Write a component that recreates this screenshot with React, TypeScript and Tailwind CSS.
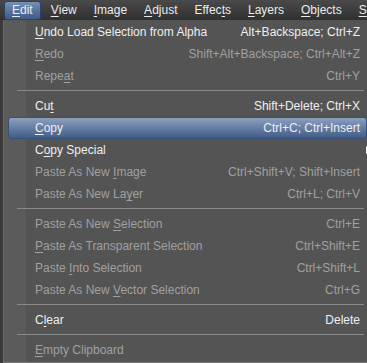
import React from 'react';

type Item =
  | { sep: true }
  | { sep?: false; label: string; u: number; key?: string; on?: boolean; hot?: boolean; sub?: boolean };

const items: Item[] = [
  { label: 'Undo Load Selection from Alpha', u: 0, key: 'Alt+Backspace; Ctrl+Z', on: true },
  { label: 'Redo', u: 0, key: 'Shift+Alt+Backspace; Ctrl+Alt+Z' },
  { label: 'Repeat', u: 4, key: 'Ctrl+Y' },
  { sep: true },
  { label: 'Cut', u: 2, key: 'Shift+Delete; Ctrl+X', on: true },
  { label: 'Copy', u: 0, key: 'Ctrl+C; Ctrl+Insert', on: true, hot: true },
  { label: 'Copy Special', u: 1, on: true, sub: true },
  { label: 'Paste As New Image', u: 13, key: 'Ctrl+Shift+V; Shift+Insert' },
  { label: 'Paste As New Layer', u: 15, key: 'Ctrl+L; Ctrl+V' },
  { sep: true },
  { label: 'Paste As New Selection', u: 13, key: 'Ctrl+E' },
  { label: 'Paste As Transparent Selection', u: 0, key: 'Ctrl+Shift+E' },
  { label: 'Paste Into Selection', u: 6, key: 'Ctrl+Shift+L' },
  { label: 'Paste As New Vector Selection', u: 13, key: 'Ctrl+G' },
  { sep: true },
  { label: 'Clear', u: 1, key: 'Delete', on: true },
  { sep: true },
  { label: 'Empty Clipboard', u: 0 },
];

const bar = [
  { label: 'Edit', u: 0 },
  { label: 'View', u: 0 },
  { label: 'Image', u: 0 },
  { label: 'Adjust', u: 0 },
  { label: 'Effects', u: 5 },
  { label: 'Layers', u: 0 },
  { label: 'Objects', u: 0 },
  { label: 'Se', u: 0 },
];

const Mn = ({ text, u }: { text: string; u: number }) => (
  <>
    {text.slice(0, u)}
    <span className="underline underline-offset-2">{text[u]}</span>
    {text.slice(u + 1)}
  </>
);

export default function App() {
  return (
    <div
      className="w-[367px] h-[363px] overflow-hidden bg-[#3a3a3a] text-[12px] leading-none"
      style={{ fontFamily: '"Liberation Sans", Arial, sans-serif' }}
    >
      <div className="h-[20px] flex items-center pl-[4px] gap-[3px] bg-gradient-to-b from-[#4a4a4a] to-[#303030] whitespace-nowrap">
        {bar.map((b, i) => (
          <div
            key={b.label}
            className={
              'h-[19px] flex items-center px-[7px] rounded-[3px] text-[#ececec] ' +
              (i === 0 ? 'bg-gradient-to-b from-[#7590b6] to-[#3e5a86] border border-[#2c4266]' : '')
            }
          >
            <Mn text={b.label} u={b.u} />
          </div>
        ))}
      </div>
      <div className="ml-[3px] h-[343px] border-l border-[#6a6a6a] border-b border-b-[#7a7a7a] bg-[#545454] flex">
        <div className="w-[22px] shrink-0 bg-[#5b5b5b]" />
        <div className="flex-1 flex flex-col pt-[1px] -ml-[22px]">
          {items.map((it, i) =>
            it.sep ? (
              <div key={i} className="h-[8px] pt-[3px] pl-[13px] pr-[3px]">
                <div className="h-[1px] bg-[#8a8a8a]" />
              </div>
            ) : (
              <div key={i} className="h-[22px] relative flex items-center pl-[31px] pr-[7px] whitespace-nowrap">
                {it.hot && (
                  <div className="absolute left-[4px] right-[0px] top-0 bottom-0 rounded-[3px] border border-[#34507c] bg-gradient-to-b from-[#8ba0bf] to-[#435d88]" />
                )}
                <span className={'relative ' + (it.on ? 'text-[#efefef]' : 'text-[#a0a0a0]')}>
                  <Mn text={it.label} u={it.u} />
                </span>
                <span className={'relative ml-auto ' + (it.on ? 'text-[#efefef]' : 'text-[#a0a0a0]')}>{it.key}</span>
                {it.sub && (
                  <span className="absolute right-[-3px] top-[7px] w-0 h-0 border-y-[4px] border-y-transparent border-l-[4px] border-l-white" />
                )}
              </div>
            )
          )}
        </div>
      </div>
    </div>
  );
}
